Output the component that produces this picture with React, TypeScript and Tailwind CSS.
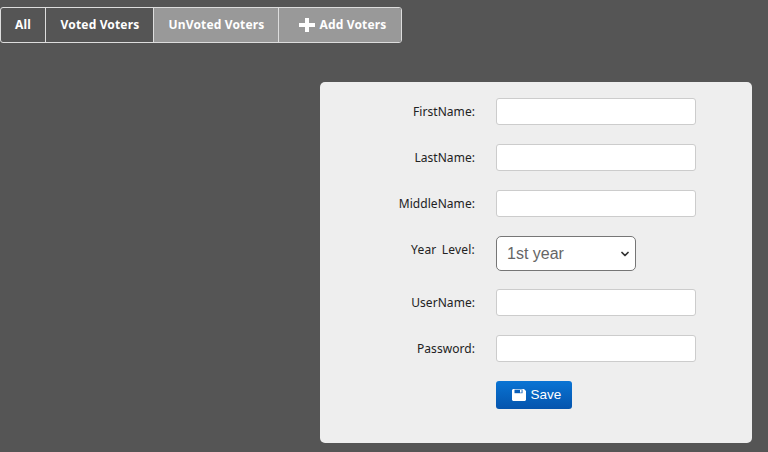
import { ChevronDown } from "lucide-react";

const TOP_FIELDS = ["FirstName", "LastName", "MiddleName"];
const BOTTOM_FIELDS = ["UserName", "Password"];

function SaveIcon() {
  return (
    <svg width="14" height="12" viewBox="0 0 14 12" className="shrink-0">
      <path d="M1 0H12L14 2V11L13 12H1L0 11V1Z" fill="#fff" />
      <rect x="2.5" y="0.6" width="8" height="3.6" fill="#0a5fb8" />
      <rect x="8" y="1" width="1.6" height="2.6" fill="#fff" />
    </svg>
  );
}

function Field({ label }: { label: string }) {
  return (
    <div className="flex items-center h-[27px] mb-[19px]">
      <label className="w-[155px] mr-[21px] text-right text-[12px] tracking-[0.05px] text-[#222]">{label}:</label>
      <input
        type={label === "Password" ? "password" : "text"}
        className="w-[200px] h-[27px] bg-white border border-[#ccc] rounded-[3px]"
      />
    </div>
  );
}

export default function App() {
  return (
    <div className="w-[768px] h-[452px] overflow-hidden bg-[#555] pt-[7px] font-['Noto_Sans',sans-serif]">
      {/* Tabs */}
      <div className="flex w-[402px] h-[36px] border border-[#ddd] rounded-[3px] overflow-hidden text-[12px] tracking-[0.15px] font-bold text-white">
        <div className="w-[45px] flex items-center justify-center border-r border-[#ddd]">All</div>
        <div className="w-[108px] pl-[1px] flex items-center justify-center border-r border-[#ddd]">Voted Voters</div>
        <div className="w-[125px] pl-[1px] flex items-center justify-center border-r border-[#ddd] bg-[#999]">UnVoted Voters</div>
        <div className="flex-1 pl-[5px] flex items-center justify-center gap-[5px] bg-[#999]">
          <svg width="16" height="14" viewBox="0 0 16 14">
            <path d="M6 0H10V5H16V9H10V14H6V9H0V5H6Z" fill="#fff" />
          </svg>
          Add Voters
        </div>
      </div>

      {/* Form */}
      <div className="ml-[320px] mt-[39px] w-[432px] h-[361px] bg-[#eee] rounded-[5px] pt-[16px]">
        {TOP_FIELDS.map(f => (
          <Field key={f} label={f} />
        ))}

        <div className="flex items-start h-[35px] mb-[18px]">
          <label className="w-[155px] mr-[21px] text-right text-[12px] tracking-[0.2px] [word-spacing:2px] text-[#222] mt-[5px]">Year Level:</label>
          <div className="relative w-[140px] h-[35px] bg-white border border-[#767676] rounded-[5px] pl-[10px] pt-[1px] flex items-center text-[16px] text-[#666] font-['Liberation_Sans',sans-serif]">
            1st year
            <ChevronDown size={12} strokeWidth={3.5} className="absolute right-[4px] top-[11px] text-[#333]" />
          </div>
        </div>

        {BOTTOM_FIELDS.map(f => (
          <Field key={f} label={f} />
        ))}

        <div className="pl-[176px]">
          <button className="w-[76px] h-[28px] pl-[5px] rounded-[3px] bg-gradient-to-b from-[#0a74d4] to-[#0554ad] flex items-center justify-center gap-[5px] text-[13.5px] text-white font-['Liberation_Sans',sans-serif]">
            <SaveIcon />
            Save
          </button>
        </div>
      </div>
    </div>
  );
}
